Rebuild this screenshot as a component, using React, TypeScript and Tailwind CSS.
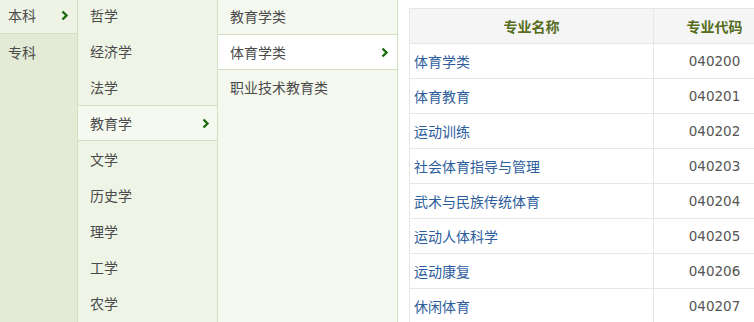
import React from 'react';

const levels = ['本科', '专科'];
const categories = ['哲学', '经济学', '法学', '教育学', '文学', '历史学', '理学', '工学', '农学'];
const classes = ['教育学类', '体育学类', '职业技术教育类'];
const majors = [
  ['体育学类', '040200'],
  ['体育教育', '040201'],
  ['运动训练', '040202'],
  ['社会体育指导与管理', '040203'],
  ['武术与民族传统体育', '040204'],
  ['运动人体科学', '040205'],
  ['运动康复', '040206'],
  ['休闲体育', '040207'],
];

function Chevron() {
  return (
    <svg width="8" height="11" viewBox="0 0 8 11" className="shrink-0">
      <polyline points="1.5,1.5 5.5,5.5 1.5,9.5" fill="none" stroke="#1c6a10" strokeWidth="2.4" />
    </svg>
  );
}

export default function App() {
  const font = { fontFamily: '"Microsoft YaHei", "Noto Sans CJK SC", sans-serif' };
  return (
    <div className="w-[754px] h-[322px] overflow-hidden bg-white flex text-[14px]" style={font}>
      {/* level column */}
      <div className="w-[78px] shrink-0 bg-[#e3ebd6] border-r border-[#d3dfc1]">
        <div className="-mt-[3px]">
          {levels.map((name, i) => (
            <div
              key={name}
              className={
                i === 0
                  ? 'h-[37px] pl-[8px] pr-[8px] flex items-center justify-between bg-[#eef3e6] border-b border-[#d3dfc1] text-[#4a4a4a]'
                  : 'h-[36px] pl-[8px] flex items-center text-[#4a4a4a]'
              }
            >
              <span>{name}</span>
              {i === 0 && <Chevron />}
            </div>
          ))}
        </div>
      </div>

      {/* category column */}
      <div className="w-[140px] shrink-0 bg-[#eef4e6] border-r border-[#d3dfc1]">
        <div className="-mt-[3px]">
          {categories.map((name) => {
            const active = name === '教育学';
            return (
              <div
                key={name}
                className={
                  active
                    ? 'h-[36px] pl-[12px] pr-[7px] flex items-center justify-between bg-[#f6f9f0] border-y border-[#d3dfc1] text-[#4a4a4a]'
                    : 'h-[36px] pl-[12px] flex items-center text-[#4a4a4a]'
                }
              >
                <span>{name}</span>
                {active && <Chevron />}
              </div>
            );
          })}
        </div>
      </div>

      {/* class column */}
      <div className="w-[180px] shrink-0 bg-[#f5f8ef] border-r border-[#d3dfc1]">
        <div className="-mt-[1px]">
          {classes.map((name) => {
            const active = name === '体育学类';
            return (
              <div
                key={name}
                className={
                  active
                    ? 'h-[36px] pl-[12px] pr-[8px] flex items-center justify-between bg-white border-y border-[#d3dfc1] text-[#4a4a4a]'
                    : 'h-[35px] pl-[12px] flex items-center text-[#4a4a4a]'
                }
              >
                <span>{name}</span>
                {active && <Chevron />}
              </div>
            );
          })}
        </div>
      </div>

      {/* majors table */}
      <div className="pl-[11px] pt-[8px] shrink-0 w-[377px]">
        <table className="border-collapse w-[366px] min-w-[366px] table-fixed">
          <thead>
            <tr className="h-[35px] bg-[#f5f5f5]">
              <th className="w-[244px] border border-[#e6e6e6] text-[#566d1c] font-bold text-center">专业名称</th>
              <th className="w-[122px] border border-[#e6e6e6] text-[#566d1c] font-bold text-center">专业代码</th>
            </tr>
          </thead>
          <tbody>
            {majors.map(([name, code]) => (
              <tr key={code} className="h-[35px]">
                <td className="border border-[#e6e6e6] pl-[4px] text-[#2d5d9c]">{name}</td>
                <td className="border border-[#e6e6e6] text-center text-[#555] font-['DejaVu_Sans',sans-serif] text-[13.5px]">
                  {code}
                </td>
              </tr>
            ))}
          </tbody>
        </table>
      </div>
    </div>
  );
}
